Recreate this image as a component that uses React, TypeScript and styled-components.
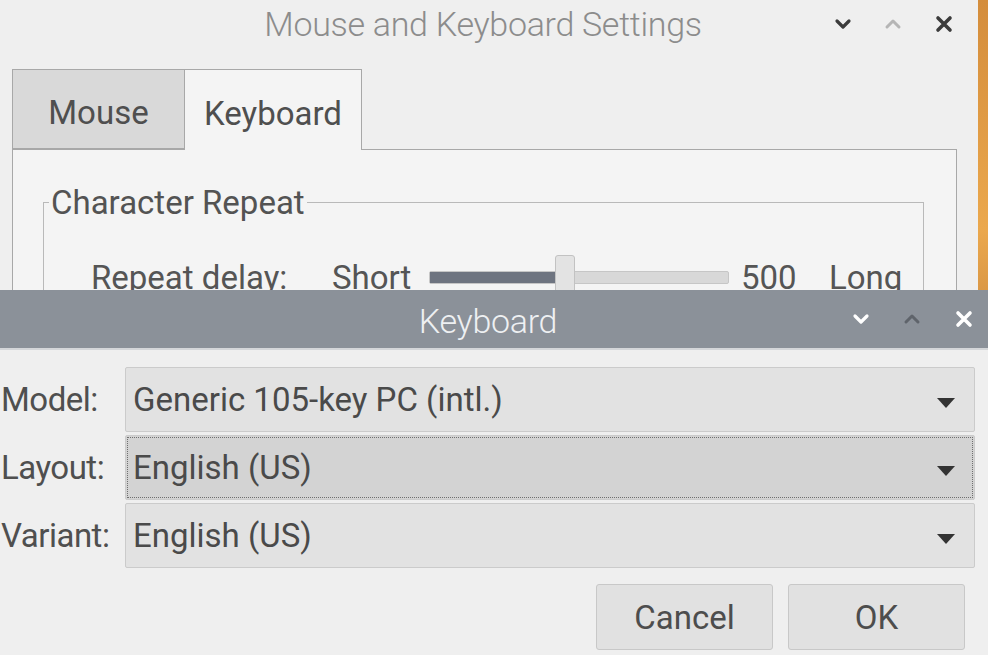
import React from "react";
import styled, { createGlobalStyle } from "styled-components";

const Global = createGlobalStyle`
  html, body { margin: 0; padding: 0; }
  body {
    width: 988px; height: 655px; overflow: hidden;
    background: #efefef;
    font-family: Roboto, "Noto Sans", "Liberation Sans", sans-serif;
    color: #4d4d4d;
  }
`;

const Desktop = styled.div`
  position: relative;
  display: flex;
  width: 988px;
  height: 655px;
`;

const Wallpaper = styled.div`
  flex: 0 0 10px;
  background: linear-gradient(180deg, #d48d3c 0%, #eba84d 35%, #c9873f 55%, #a27550 70%, #9a7352 100%);
`;

const BackWindow = styled.div`
  flex: 1;
  display: flex;
  flex-direction: column;
  background: #efefef;
`;

const TitleBar = styled.div<{ $active?: boolean }>`
  position: relative;
  flex: 0 0 auto;
  height: ${({ $active }) => ($active ? 60 : 48)}px;
  display: flex;
  align-items: center;
  justify-content: center;
  padding-top: ${({ $active }) => ($active ? 4 : 0)}px;
  background: ${({ $active }) => ($active ? "#8b9199" : "#efefef")};
  border-bottom: ${({ $active }) => ($active ? "2px solid #d4d6d9" : "none")};
  box-sizing: border-box;
`;

const Title = styled.div<{ $active?: boolean }>`
  font-size: 34px;
  font-weight: 300;
  letter-spacing: -0.3px;
  color: ${({ $active }) => ($active ? "#eef0f2" : "#8c8c8c")};
  margin-left: -12px;
`;

const Controls = styled.div<{ $active?: boolean }>`
  position: absolute;
  top: 0;
  bottom: 0;
  right: ${({ $active }) => ($active ? 14 : 24)}px;
  display: flex;
  align-items: center;
  gap: ${({ $active }) => ($active ? 33 : 32)}px;
`;

const Notebook = styled.div`
  margin: 21px 21px 0 12px;
  display: flex;
  flex-direction: column;
  flex: 1;
`;

const TabRow = styled.div`
  display: flex;
  align-items: flex-end;
  height: 80px;
`;

const Tab = styled.div<{ $active?: boolean }>`
  box-sizing: border-box;
  width: ${({ $active }) => ($active ? 177 : 173)}px;
  height: ${({ $active }) => ($active ? 81 : 80)}px;
  margin-bottom: ${({ $active }) => ($active ? -1 : 0)}px;
  display: flex;
  align-items: center;
  justify-content: center;
  padding-top: 7px;
  font-size: 33px;
  color: #4f4f4f;
  background: ${({ $active }) => ($active ? "#f4f4f4" : "#d9d9d9")};
  border: 1px solid #a8a8a8;
  border-bottom: ${({ $active }) => ($active ? "none" : "1px solid #a8a8a8")};
  border-left: ${({ $active }) => ($active ? "none" : "1px solid #a8a8a8")};
  position: relative;
  z-index: 1;
`;

const Panel = styled.div`
  flex: 1;
  background: #f4f4f4;
  border: 1px solid #a8a8a8;
  padding: 33px 32px 0 30px;
`;

const Frame = styled.fieldset`
  margin: 0;
  padding: 0;
  border: 1px solid #b9b9b9;
  height: 200px;
`;

const Legend = styled.legend`
  font-size: 33px;
  color: #535353;
  padding: 0 2px;
  margin-left: 5px;
`;

const SliderRow = styled.div`
  display: flex;
  align-items: center;
  padding: 36px 0 0 47px;
  font-size: 33px;
  color: #555;
`;

const RowLabel = styled.span<{ $w?: number }>`
  width: ${({ $w }) => $w ?? "auto"}px;
  flex: 0 0 auto;
`;

const Trough = styled.div`
  position: relative;
  width: 300px;
  height: 13px;
  margin: 0 12px 0 0;
  background: #d8d8d8;
  border: 1px solid #c6c6c6;
  box-sizing: border-box;
  border-radius: 2px;
`;

const Fill = styled.div`
  height: 100%;
  background: #6e7480;
`;

const Thumb = styled.div`
  position: absolute;
  top: -17px;
  width: 20px;
  height: 40px;
  box-sizing: border-box;
  background: #e3e3e3;
  border: 1px solid #c2c2c2;
  border-radius: 3px;
`;

const Dialog = styled.div`
  position: absolute;
  left: 0;
  top: 290px;
  width: 988px;
  height: 365px;
  display: flex;
  flex-direction: column;
  background: #efefef;
`;

const Form = styled.div`
  display: grid;
  grid-template-columns: 125px 850px;
  row-gap: 3px;
  align-items: center;
  padding: 17px 0 0 0;
`;

const FieldLabel = styled.div`
  font-size: 33px;
  color: #4f4f4f;
  padding-left: 1px;
  letter-spacing: -0.5px;
`;

const Combo = styled.div<{ $focus?: boolean }>`
  position: relative;
  box-sizing: border-box;
  height: 65px;
  display: flex;
  align-items: center;
  padding: 0 10px 0 7px;
  font-size: 33px;
  color: #4a4a4a;
  background: ${({ $focus }) => ($focus ? "#d3d3d3" : "#e2e2e2")};
  border: 1px solid #cbcbcb;
  border-radius: 2px;
  &::after {
    content: "";
    display: ${({ $focus }) => ($focus ? "block" : "none")};
    position: absolute;
    inset: 1px;
    border: 1px dotted #6f6f6f;
    pointer-events: none;
  }
`;

const ComboText = styled.span`
  flex: 1;
`;

const Arrow = styled.span`
  width: 0;
  height: 0;
  border-left: 9px solid transparent;
  border-right: 9px solid transparent;
  border-top: 10px solid #333;
  margin-right: 9px;
  margin-top: 6px;
`;

const Buttons = styled.div`
  display: flex;
  justify-content: flex-end;
  gap: 15px;
  padding: 16px 23px 0 0;
`;

const Button = styled.div`
  box-sizing: border-box;
  width: 177px;
  height: 66px;
  display: flex;
  align-items: center;
  justify-content: center;
  font-size: 33px;
  color: #4d4d4d;
  background: #e1e1e1;
  border: 1px solid #c8c8c8;
  border-radius: 3px;
`;

type IconProps = { color: string };

const ChevronDown = ({ color }: IconProps) => (
  <svg width="18" height="12" viewBox="0 0 18 12" aria-hidden>
    <path d="M3 3l6 6 6-6" fill="none" stroke={color} strokeWidth="3.2" strokeLinecap="round" strokeLinejoin="round" />
  </svg>
);

const ChevronUp = ({ color }: IconProps) => (
  <svg width="18" height="12" viewBox="0 0 18 12" aria-hidden>
    <path d="M3 9l6-6 6 6" fill="none" stroke={color} strokeWidth="3" strokeLinecap="round" strokeLinejoin="round" />
  </svg>
);

const Close = ({ color }: IconProps) => (
  <svg width="20" height="20" viewBox="0 0 20 20" aria-hidden>
    <path d="M4 4l12 12M16 4L4 16" fill="none" stroke={color} strokeWidth="3.6" strokeLinecap="round" />
  </svg>
);

const WindowControls = ({ active }: { active?: boolean }) => (
  <Controls $active={active}>
    <ChevronDown color={active ? "#ffffff" : "#3c3c3c"} />
    <ChevronUp color={active ? "#5f646b" : "#b5b5b5"} />
    <Close color={active ? "#ffffff" : "#3c3c3c"} />
  </Controls>
);

const fields = [
  { label: "Model:", value: "Generic 105-key PC (intl.)" },
  { label: "Layout:", value: "English (US)", focus: true },
  { label: "Variant:", value: "English (US)" },
];

export default function App() {
  const delay = 125;
  return (
    <>
      <Global />
      <Desktop>
        <BackWindow>
          <TitleBar>
            <Title>Mouse and Keyboard Settings</Title>
            <WindowControls />
          </TitleBar>
          <Notebook>
            <TabRow>
              <Tab>Mouse</Tab>
              <Tab $active>Keyboard</Tab>
            </TabRow>
            <Panel>
              <Frame>
                <Legend>Character Repeat</Legend>
                <SliderRow>
                  <RowLabel $w={241}>Repeat delay:</RowLabel>
                  <RowLabel $w={97}>Short</RowLabel>
                  <Trough>
                    <Fill style={{ width: delay }} />
                    <Thumb style={{ left: delay }} />
                  </Trough>
                  <RowLabel $w={88}>500</RowLabel>
                  <RowLabel>Long</RowLabel>
                </SliderRow>
              </Frame>
            </Panel>
          </Notebook>
        </BackWindow>
        <Wallpaper />
        <Dialog>
          <TitleBar $active>
            <Title $active>Keyboard</Title>
            <WindowControls active />
          </TitleBar>
          <Form>
            {fields.map((f) => (
              <React.Fragment key={f.label}>
                <FieldLabel>{f.label}</FieldLabel>
                <Combo $focus={f.focus}>
                  <ComboText>{f.value}</ComboText>
                  <Arrow />
                </Combo>
              </React.Fragment>
            ))}
          </Form>
          <Buttons>
            <Button>Cancel</Button>
            <Button>OK</Button>
          </Buttons>
        </Dialog>
      </Desktop>
    </>
  );
}
